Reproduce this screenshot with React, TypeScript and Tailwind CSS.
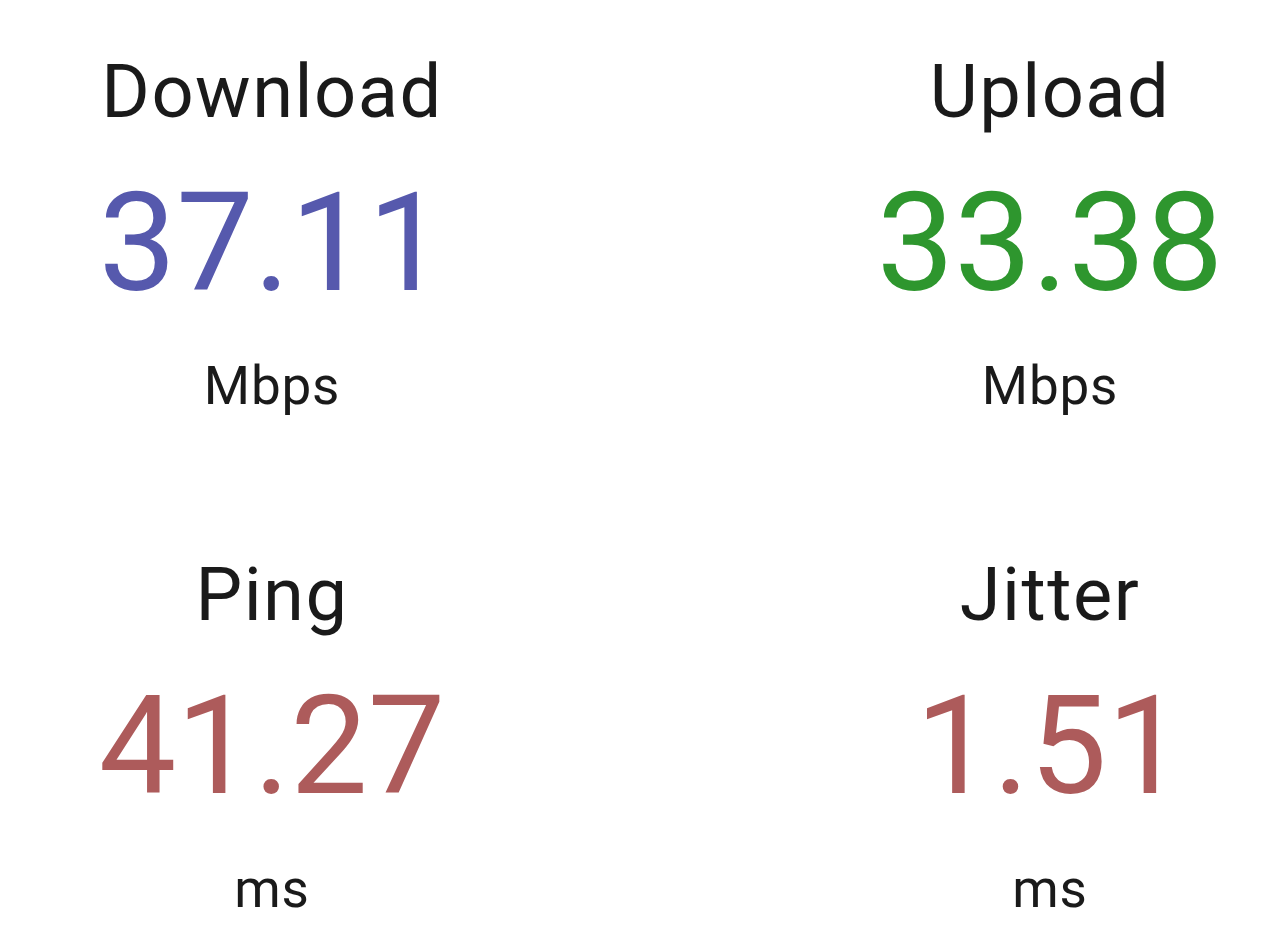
export default function App() {
  const items = [
    { title: "Download", value: "37.11", unit: "Mbps", color: "text-[#5659ad]" },
    { title: "Upload", value: "33.38", unit: "Mbps", color: "text-[#2e962e]" },
    { title: "Ping", value: "41.27", unit: "ms", color: "text-[#ad5b5b]" },
    { title: "Jitter", value: "1.51", unit: "ms", color: "text-[#ad5b5b]" },
  ];
  return (
    <div
      className="w-[1280px] h-[925px] bg-white overflow-hidden pl-[72px] pr-[30px] pt-[55px]"
      style={{ fontFamily: "Roboto, 'Noto Sans', sans-serif" }}
    >
      <div className="grid grid-cols-[400px_400px] justify-between gap-y-[146px]">
        {items.map((it) => (
          <div key={it.title} className="flex flex-col items-center">
            <div className="text-[74px] leading-[74px] tracking-[0.02em] text-[#1a1a1a] whitespace-nowrap">{it.title}</div>
            <div className={`mt-[45px] text-[138px] leading-[138px] whitespace-nowrap ${it.color}`}>{it.value}</div>
            <div className="mt-[48px] text-[53px] leading-[52px] tracking-[0.015em] text-[#1a1a1a] whitespace-nowrap">{it.unit}</div>
          </div>
        ))}
      </div>
    </div>
  );
}
